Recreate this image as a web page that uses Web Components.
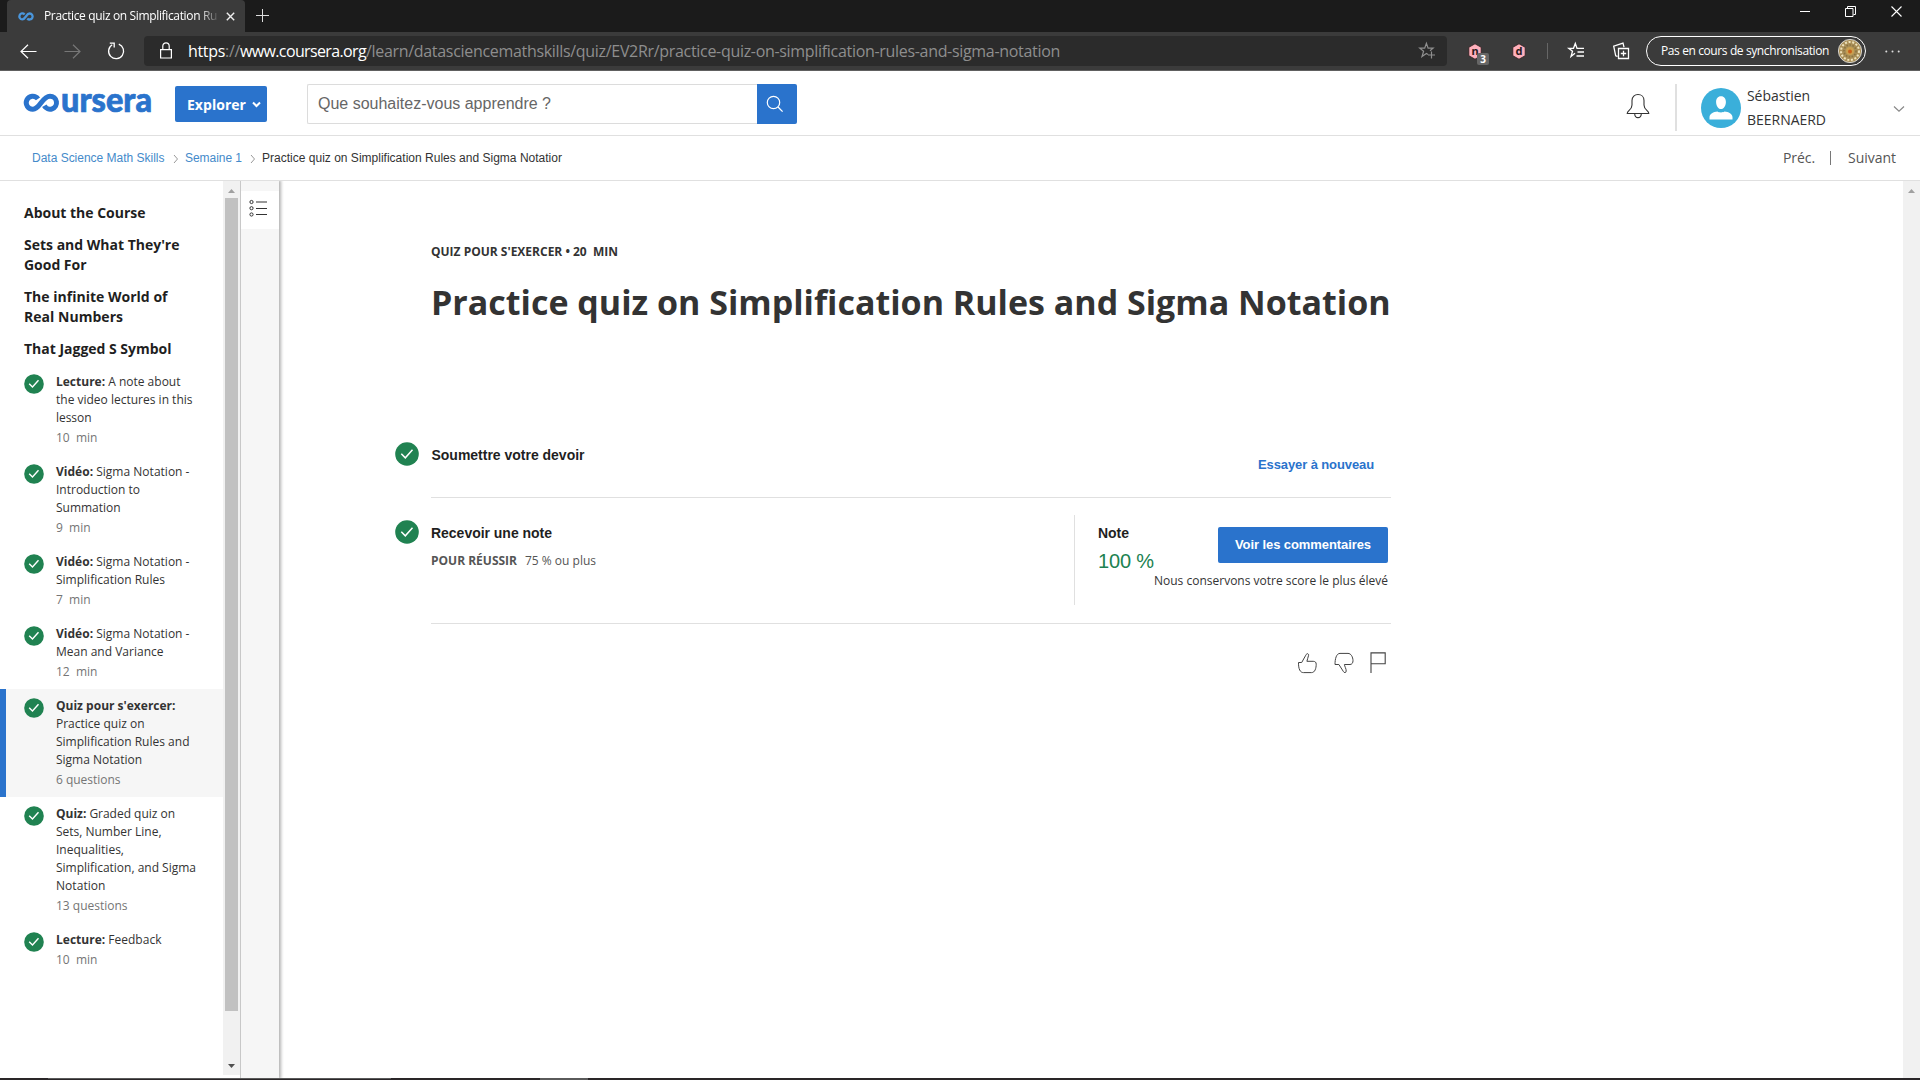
<!DOCTYPE html>
<html lang="fr">
<head>
<meta charset="utf-8">
<title>Practice quiz on Simplification Rules and Sigma Notation</title>
<style>
html,body{margin:0;height:100%;overflow:hidden;background:#fff}
body{font-family:"Open Sans","Noto Sans",sans-serif;color:#333}
</style>
</head>
<body>
<app-shell></app-shell>
<script>
const define=(name,html,setup)=>{
  const t=document.createElement('template');
  t.innerHTML=html;
  customElements.define(name,class extends HTMLElement{
    connectedCallback(){
      if(this.shadowRoot)return;
      this.attachShadow({mode:'open'}).appendChild(t.content.cloneNode(true));
      if(setup)setup(this,this.shadowRoot);
    }
  });
};

/* ---------- icons: [width, height, markup] ---------- */
const ICONS={
  infinity:[16,9,'<path d="M6.6 2.400A3 3 0 1 0 4.300 7.400C7.500 7.400 8.300 1.500 11.600 1.500A3 3 0 1 1 9.300 6.400" stroke="#4a96dc" stroke-width="2.300"/>'],
  tabclose:[9,9,'<path d="M.8.8l7.4 7.4M8.2.8L.8 8.2" stroke="#eee" stroke-width="1.4"/>'],
  plus:[13,13,'<path d="M6.5 0v13M0 6.5h13" stroke="#ddd"/>'],
  back:[17,15,'<path d="M16.5 7.5H1M8 .7L1 7.5l7 6.8" stroke="#fff" stroke-width="1.2"/>'],
  forward:[17,15,'<path d="M.5 7.500H16M9 .7l7 6.800-7 6.800" stroke="#777" stroke-width="1.200"/>'],
  reload:[17,18,'<path d="M10.800 2.200a7.500 7.500 0 1 1-6.600.6M1.800 1.200h4.400v4.400" stroke="#fff" stroke-width="1.300"/>'],
  lock:[12,17,'<path d="M.6 7.600h10.800v8.400H.6zM2.800 7.500V4a3.200 3.200 0 0 1 6.400 0v3.500" stroke="#fff" stroke-width="1.200"/>'],
  staradd:[17,18,'<path d="M9 12.500L7.400 11.400 3 14.500l1.600-5.300L.8 6.200h4.900L7.400 1.300 9.100 6.200h5L11 8.800M12.500 9.500v7M9 13h7" stroke="#8f8f8f" stroke-width="1.200"/>'],
  favorites:[17,18,'<path d="M7 11.300L3 14.500l1.500-5.300L.8 6.300h4.700L7.300 1.500 9 6.300h7M9.500 10H16M8.500 14H16" stroke="#fff" stroke-width="1.300"/>'],
  collections:[17,18,'<path d="M5.500 6.500h10v10h-10zM10.500 8.800v5.400M7.800 11.500h5.400M4.500 14.300L2.700 13.800.7 4.200 10 1.200l1 4" stroke="#fff" stroke-width="1.300"/>'],
  dots:[15,3,'<g fill="#ddd" stroke="none"><circle cx="1.300" cy="1.500" r="1"/><circle cx="7.500" cy="1.500" r="1"/><circle cx="13.700" cy="1.500" r="1"/></g>'],
  min:[10,11,'<path d="M0 5.500h10" stroke="#fff"/>'],
  restore:[11,11,'<path d="M.5 2.500h7.500v8H.5zM2.500 2.500v-2h8v8h-2" stroke="#fff" stroke-width="1"/>'],
  close:[11,11,'<path d="M.5.5l10 10M10.500.5l-10 10" stroke="#fff" stroke-width="1.100"/>'],
  hex:[14,17,'<path d="M7 .8l6.200 3.500v8.400L7 16.200.8 12.700V4.300z" fill="#ffb0bc" stroke="#2a1a1c" stroke-width=".8"/>'],
  search:[18,18,'<circle cx="7.500" cy="7.500" r="6.200" stroke="#fff" stroke-width="1.200"/><path d="M12 12l4.600 4.600" stroke="#fff" stroke-width="1.300"/>'],
  bell:[24,26,'<path d="M1.200 20.500C1.200 17.500 6 17 6 12V7.500C6 3.700 8.700 1.500 12 1.500s6 2.200 6 6V12c0 5 4.800 5.500 4.800 8.500zM8.700 20.700c.2 5.200 6.400 5.200 6.600 0" stroke="#333" stroke-width="1.100"/>'],
  chevw:[9,7,'<path d="M1 1.500l3.500 3.500L8 1.500" stroke="#fff" stroke-width="2"/>'],
  chev:[12,8,'<path d="M1 1.500l5 4.700 5-4.700" stroke="#888" stroke-width="1.200"/>'],
  crumb:[6,10,'<path d="M1 1l3.500 4L1 9" stroke="#999" stroke-width="1"/>'],
  user:[40,40,'<circle cx="20" cy="20" r="20" fill="#3aafda"/><path d="M20 8.300c3.300 0 4.900 2.500 4.900 5.600 0 3.400-1.900 7.100-4.900 7.100s-4.900-3.700-4.900-7.100c0-3.100 1.600-5.600 4.900-5.600zM8.500 31.500v-2.300c0-3 4-5.600 8-5.700 1.500 1.200 5.500 1.200 7 0 4 .1 8 2.700 8 5.700v2.300z" fill="#fff"/>'],
  list:[18,18,'<g stroke="#333"><circle cx="2.500" cy="3" r="1.600"/><circle cx="2.500" cy="9.200" r="1.600"/><circle cx="2.500" cy="15.500" r="1.600"/><path d="M7 3h11" stroke="#777" stroke-width="1.500"/><path d="M7 9.500h11M7 15.500h11"/></g>'],
  up:[20,22,'<path d="M1.500 10.500H4.700L8.800 3.200C9.800 1 11.800 1.300 11.600 3.300 11.500 5 10 7.500 9.900 9.300h6.300c2 0 3 1 3 2.900 0 4-1.200 8.400-4.700 8.400H6.400c-3.200 0-5-3.500-4.900-10.100z" stroke="#444" stroke-width="1"/>'],
  down:[20,22,'<path d="M1 12.500C1 7 2.300 1.400 6 1.400h8c3 0 4.900 3.500 5 7.300 0 2-1 3.800-3 3.800h-5.600c0 1.500 2 4.500 1.800 6.600-.2 2-2 2-2.900.3L4.900 12.500z" stroke="#444" stroke-width="1"/>'],
  flag:[16,21,'<path d="M1 21V.9h14.200v10.800H1" stroke="#444" stroke-width="1.100"/>'],
  arrowup:[7,4,'<path d="M0 4L3.500 0 7 4z" fill="#a0a0a0" stroke="none"/>'],
  arrowdown:[7,4,'<path d="M0 0l3.500 4L7 0z" fill="#505050" stroke="none"/>'],
  check20:[20,20,'<circle cx="10" cy="10" r="9.800" fill="#208251"/><path d="M5.200 9.700l3.300 3.300 6-6.700" stroke="#fff" stroke-width="1.400"/>'],
  check24:[24,24,'<circle cx="12" cy="12" r="11.800" fill="#208251"/><path d="M6.300 11.700l4 4.100 7.200-8" stroke="#fff" stroke-width="1.500"/>'],
  mark:[37,20,'<path d="M14 5.900A6.500 6.500 0 1 0 9 16.200C16 16.200 18 3.200 26 3.200A6.500 6.500 0 1 1 20.300 12.800" stroke="#2a73cc" stroke-width="5"/>'],
  rosette:[24,24,'<circle cx="12" cy="12" r="11.600" fill="#a98f58" stroke="#eee" stroke-width=".8"/><circle cx="12" cy="12" r="9" stroke="#efe3bb" stroke-width="2" stroke-dasharray="2 1.700"/><circle cx="12" cy="12" r="6" stroke="#8a7340" stroke-width="1.600" stroke-dasharray="1.500 1.500"/><circle cx="12" cy="12" r="4" fill="#c9a050"/><circle cx="12" cy="12.500" r="2" fill="#c9601a"/>']
};
define('ui-icon','<style>:host{display:block;flex:none}svg{display:block;overflow:visible}</style>',(el,root)=>{
  const [w,h,m]=ICONS[el.getAttribute('name')];
  const box=document.createElement('div');
  box.innerHTML=`<svg width="${w}" height="${h}" viewBox="0 0 ${w} ${h}" fill="none">${m}</svg>`;
  root.appendChild(box.firstChild);
});

/* ---------- browser window ---------- */
define('browser-bar',`<style>
:host{display:block;height:71px;font-size:12px;color:#fff;flex:none}
.tabs{height:32px;background:#1b1b1b;display:flex;align-items:flex-start}
.tab{margin-left:7px;width:238px;height:32px;background:#3b3b3b;border-radius:4px 4px 0 0;display:flex;box-sizing:border-box;padding-left:11px}
.tab ui-icon{margin-top:12px}
.tab .t{margin-left:10px;width:174px;height:32px;line-height:31px;-webkit-mask-image:linear-gradient(90deg,#000 155px,transparent 176px)}
.tab .x{margin-left:8px}
.plus{margin:9px 0 0 11px}
.win{margin-left:auto;display:flex;gap:35px;padding:6px 18px 0 0}
.bar{height:38px;background:#3b3b3b;border-bottom:1px solid #606060;display:flex;align-items:center;padding-left:20px}
.url{margin-left:19px;width:1303px;height:30px;margin-top:-1px;border-radius:4px;background:#2b2b2b;display:flex;align-items:center;padding-left:16px;box-sizing:border-box}
.addr{margin-left:16px;font-size:16px;line-height:28px;display:flex;color:#8e8e8e}
b{font-weight:400;color:#fff}
.url .s{margin-left:auto;margin-right:11px}
.ext{position:relative;display:grid;place-items:center;margin-left:21px}
.ext>*{grid-area:1/1}
.ext span{color:#2a1a1c;font:bold 11px/14px "Noto Sans",sans-serif;z-index:1}
.ext .badge{position:absolute;left:9px;top:10px;width:12px;height:12px;border-radius:2px;background:#666;color:#fff;font:bold 10px/12px "Open Sans",sans-serif;text-align:center;z-index:2}
.sep{width:1px;height:16px;background:#666;margin-left:21px}
.pill{margin-left:16px;margin-top:-1px;width:220px;height:30px;border:1px solid #fff;border-radius:15px;box-sizing:border-box;display:flex;align-items:center;justify-content:space-between;padding:0 3px 0 14px}
</style>
<div class="tabs"><div class="tab"><ui-icon name="infinity"></ui-icon><div class="t"><fit-text w="173">Practice quiz on Simplification Ru</fit-text></div><ui-icon class="x" name="tabclose"></ui-icon></div><ui-icon class="plus" name="plus"></ui-icon>
<div class="win"><ui-icon name="min"></ui-icon><ui-icon name="restore"></ui-icon><ui-icon name="close"></ui-icon></div></div>
<div class="bar"><ui-icon name="back"></ui-icon><ui-icon name="forward" style="margin-left:27px"></ui-icon><ui-icon name="reload" style="margin-left:27px"></ui-icon>
<div class="url"><ui-icon name="lock"></ui-icon><div class="addr"><b><fit-text w="37">https</fit-text></b><fit-text w="15">://</fit-text><b><fit-text w="126">www.coursera.org</fit-text></b><fit-text w="694">/learn/datasciencemathskills/quiz/EV2Rr/practice-quiz-on-simplification-rules-and-sigma-notation</fit-text></div><ui-icon class="s" name="staradd"></ui-icon></div>
<div class="ext"><ui-icon name="hex"></ui-icon><span>n</span><div class="badge">3</div></div>
<div class="ext" style="margin-left:30px"><ui-icon name="hex"></ui-icon><span>d</span></div>
<div class="sep"></div><ui-icon name="favorites" style="margin-left:20px"></ui-icon><ui-icon name="collections" style="margin-left:28px"></ui-icon>
<div class="pill"><fit-text w="168">Pas en cours de synchronisation</fit-text><ui-icon name="rosette"></ui-icon></div>
<ui-icon name="dots" style="margin-left:19px"></ui-icon></div>`);

/* ---------- site header ---------- */
define('site-header',`<style>
:host{display:flex;height:64px;flex:none;border-bottom:1px solid #e0e0e0;align-items:flex-start}
.logo{margin:22px 0 0 24px;width:127px;height:20px;display:flex}
.logo svg{display:block;overflow:visible}
.explore{margin:15px 0 0 24px;width:92px;height:36px;background:#2a73cc;border-radius:2px;color:#fff;font-weight:700;font-size:14px;line-height:35px;display:flex;align-items:center;box-sizing:border-box;padding-left:12px}
.search{margin:13px 0 0 40px;width:450px;height:40px;border:1px solid #dcdcdc;border-right:0;border-radius:2px 0 0 2px;box-sizing:border-box;padding-left:10px;font:16px/37px "Liberation Sans",Arial,sans-serif;color:#666}
.go{margin-top:13px;width:40px;height:40px;background:#2a73cc;border-radius:0 2px 2px 0;box-sizing:border-box;padding:11px 0 0 9px}
.right{margin-left:auto;display:flex}
.line{width:2px;height:47px;background:#e0e0e0;margin:13px 0 0 25px}
.name{margin:13px 0 0 6px;width:147px;font-size:14px;line-height:24px;display:flex;flex-direction:column;align-items:flex-start}
</style>
<div class="logo" role="img" aria-label="coursera"><ui-icon name="mark"></ui-icon><svg width="90" height="20"><text x="0" y="18.500" font-family="Lato" font-weight="900" font-size="34" fill="#2a73cc" stroke="#2a73cc" stroke-width=".7" textLength="91" lengthAdjust="spacingAndGlyphs">ursera</text></svg></div>
<div class="explore"><fit-text w="59">Explorer</fit-text><ui-icon name="chevw" style="margin-left:6px"></ui-icon></div>
<div class="search"><fit-text w="233">Que souhaitez-vous apprendre ?</fit-text></div><div class="go"><ui-icon name="search"></ui-icon></div>
<div class="right"><ui-icon name="bell" style="margin-top:22px"></ui-icon><div class="line"></div><ui-icon name="user" style="margin:17px 0 0 24px"></ui-icon>
<div class="name"><fit-text w="63">Sébastien</fit-text><fit-text w="79">BEERNAERD</fit-text></div><ui-icon name="chev" style="margin:34px 15px 0 -1px"></ui-icon></div>`);

define('bread-crumbs',`<style>
:host{display:flex;height:44px;flex:none;border-bottom:1px solid #e0e0e0;align-items:center;padding:0 24px 0 32px;font:12px/44px "Liberation Sans",Arial,sans-serif;color:#333}
.a{color:#448aca}
.r{margin-left:auto;display:flex;align-items:center;font:14px/46px "Open Sans",sans-serif;color:#555}
i{width:1px;height:14px;background:#777;margin:0 17px 0 15px}
ui-icon{margin:2px 6px 0 8.500px}
</style>
<fit-text class="a" w="132.500">Data Science Math Skills</fit-text><ui-icon name="crumb"></ui-icon><fit-text class="a" w="57">Semaine 1</fit-text><ui-icon name="crumb" style="margin-left:8px"></ui-icon><fit-text w="300">Practice quiz on Simplification Rules and Sigma Notatior</fit-text>
<div class="r"><fit-text w="32">Préc.</fit-text><i></i><fit-text w="48">Suivant</fit-text></div>`);

/* ---------- course navigation ---------- */
define('nav-item',`<style>
:host{display:flex;box-sizing:border-box;padding:8px 0 8px 24px;font-size:12px;line-height:18px;color:#333}
:host([active]){background:#f6f6f6;border-left:6px solid #2a73cc;padding-left:18px}
ui-icon{margin:1px 12px 0 0}
.m{margin-top:2px;color:#757575;white-space:pre}
</style><ui-icon name="check20"></ui-icon><div><slot></slot><div class="m"><slot name="meta"></slot></div></div>`);

define('course-nav',`<style>
:host{display:flex;flex:none;width:240px}
nav{width:223px;padding-top:22px;box-sizing:border-box}
h3{margin:0 0 12px 24px;font-size:14px;line-height:20px;font-weight:700;color:#1f1f1f}
h3.last{margin-bottom:6px}
fit-text.l{display:block}
b{font-weight:700}
.sb{width:17px;height:894px;background:#f1f1f1;display:flex;flex-direction:column;align-items:center}
.thumb{width:13px;height:813px;background:#c1c1c1;margin-top:5px}
</style>
<nav>
<h3><fit-text class="l" w="121.500">About the Course</fit-text></h3>
<h3><fit-text class="l" w="155.500">Sets and What They're</fit-text><fit-text class="l" w="62.500">Good For</fit-text></h3>
<h3><fit-text class="l" w="143.500">The infinite World of</fit-text><fit-text class="l" w="99">Real Numbers</fit-text></h3>
<h3 class="last"><fit-text class="l" w="147.500">That Jagged S Symbol</fit-text></h3>
<nav-item><fit-text class="l" w="124.500"><b>Lecture:</b> A note about</fit-text><fit-text class="l" w="136.500">the video lectures in this</fit-text><fit-text class="l" w="35.500">lesson</fit-text><fit-text slot="meta" w="41.500">10&nbsp; min</fit-text></nav-item>
<nav-item><fit-text class="l" w="133.500"><b>Vidéo:</b> Sigma Notation -</fit-text><fit-text class="l" w="84">Introduction to</fit-text><fit-text class="l" w="64.500">Summation</fit-text><fit-text slot="meta" w="34.500">9&nbsp; min</fit-text></nav-item>
<nav-item><fit-text class="l" w="133.500"><b>Vidéo:</b> Sigma Notation -</fit-text><fit-text class="l" w="109">Simplification Rules</fit-text><fit-text slot="meta" w="34.500">7&nbsp; min</fit-text></nav-item>
<nav-item><fit-text class="l" w="133.500"><b>Vidéo:</b> Sigma Notation -</fit-text><fit-text class="l" w="107.500">Mean and Variance</fit-text><fit-text slot="meta" w="41.500">12&nbsp; min</fit-text></nav-item>
<nav-item active><fit-text class="l" w="119.500"><b>Quiz pour s'exercer:</b></fit-text><fit-text class="l" w="88.500">Practice quiz on</fit-text><fit-text class="l" w="133.500">Simplification Rules and</fit-text><fit-text class="l" w="86">Sigma Notation</fit-text><fit-text slot="meta" w="64.500">6 questions</fit-text></nav-item>
<nav-item><fit-text class="l" w="119">
<b>Quiz:</b> Graded quiz on</fit-text><fit-text class="l" w="105.500">Sets, Number Line,</fit-text><fit-text class="l" w="68">Inequalities,</fit-text><fit-text class="l" w="140">Simplification, and Sigma</fit-text><fit-text class="l" w="49.500">Notation</fit-text><fit-text slot="meta" w="71.500">13 questions</fit-text></nav-item>
<nav-item><fit-text class="l" w="105.500"><b>Lecture:</b> Feedback</fit-text><fit-text slot="meta" w="41.500">10&nbsp; min</fit-text></nav-item>
</nav>
<div class="sb"><ui-icon name="arrowup" style="margin-top:8px"></ui-icon><div class="thumb"></div><ui-icon name="arrowdown" style="margin:auto 0 7px"></ui-icon></div>`.replace('w="119">\n','w="119">'));

define('side-rail',`<style>
:host{display:block;flex:none;width:38px;background:#f6f6f6;border-left:1px solid #c8c8c8;box-shadow:1px 0 3px 1px rgba(0,0,0,.3);clip-path:inset(0 -6px 0 0)}
div{margin-top:10px;height:38px;background:#fff;display:flex;align-items:flex-start;padding:8px 0 0 8px;box-sizing:border-box}
</style><div><ui-icon name="list"></ui-icon></div>`);

/* ---------- quiz page ---------- */
define('quiz-page',`<style>
:host{display:flex;flex:1;min-width:0}
.c{margin:0 auto 0 116px;width:996px}
.in{margin-left:36px;width:960px}
.meta{padding-top:61px;font-size:12px;line-height:20px;font-weight:700;white-space:pre}
h1{margin:15px 0 0 0;font-size:34px;line-height:50px;font-weight:700;color:#333}
.step{display:flex}
.body{flex:1;margin-left:12px;border-bottom:1px solid #e0e0e0;display:flex;justify-content:space-between;box-sizing:border-box}
.h{font:bold 14px/20px "Liberation Sans",Arial,sans-serif;color:#1f1f1f}
.one{margin-top:112px}
.one ui-icon{margin-top:3px}
.one .body{height:59px}
.retry{margin:15px 17px 0 0;font:bold 13px/22px "Liberation Sans",Arial,sans-serif;color:#2a73cc}
.two .body{height:126px;padding-top:17px}
.two>ui-icon{margin-top:22px}
.two .h{margin-top:8px}
.pass{display:flex;margin-top:8px;font-size:12px;line-height:20px;color:#555;gap:8px}
.pass b{font-weight:700}
.grade{border-left:1px solid #e0e0e0;height:90px;width:317px;display:flex;box-sizing:border-box;padding-left:23px}
.val{margin-top:3px;font:20px/30px "Liberation Sans",Arial,sans-serif;color:#208251}
.act{display:flex;flex-direction:column;align-items:flex-end;margin-left:auto;margin-right:3px;padding-top:12px}
.btn{width:170px;height:36px;border-radius:2px;background:#2a73cc;color:#fff;font:bold 13px/35px "Liberation Sans",Arial,sans-serif;text-align:center}
.note{font-size:12px;line-height:18px;margin-top:9px}
.left{width:56px}
.fb{display:flex;padding:28px 5px 0 0;justify-content:flex-end}
.sb{width:17px;background:#f1f1f1;padding:8px 0 0 5px;box-sizing:border-box}
</style>
<div class="c">
<div class="in"><div class="meta"><fit-text w="187">QUIZ POUR S'EXERCER • 20&nbsp; MIN</fit-text></div><h1><fit-text w="959.500">Practice quiz on Simplification Rules and Sigma Notation</fit-text></h1></div>
<div class="step one"><ui-icon name="check24"></ui-icon><div class="body"><div class="h" style="margin:6px 0 0 .5px"><fit-text w="153">Soumettre votre devoir</fit-text></div><div class="retry"><fit-text w="116">Essayer à nouveau</fit-text></div></div></div>
<div class="step two"><ui-icon name="check24"></ui-icon><div class="body"><div><div class="h"><fit-text w="121">Recevoir une note</fit-text></div><div class="pass"><b><fit-text w="86">POUR RÉUSSIR</fit-text></b><fit-text w="71">75 % ou plus</fit-text></div></div>
<div class="grade"><div class="left"><div class="h"><fit-text w="31">Note</fit-text></div><div class="val"><fit-text w="56">100 %</fit-text></div></div><div class="act"><div class="btn"><fit-text w="136">Voir les commentaires</fit-text></div><div class="note"><fit-text w="234">Nous conservons votre score le plus élevé</fit-text></div></div></div></div></div>
<div class="fb"><ui-icon name="up" style="margin-right:17px"></ui-icon><ui-icon name="down" style="margin-right:16px"></ui-icon><ui-icon name="flag"></ui-icon></div>
</div>
<div class="sb"><ui-icon name="arrowup"></ui-icon></div>`);

define('task-strip',`<style>:host{display:flex;height:2px;flex:none;background:#2a2628}
i{display:block;height:1px;background:#5a5a5a}</style><i style="width:343px;margin-left:48px"></i><i style="width:48px;height:2px;margin-left:149px"></i>`);

define('app-shell',`<style>
:host{display:flex;flex-direction:column;width:1920px;height:1080px;overflow:hidden;background:#fff}
main{flex:1;min-height:0;display:flex}
</style><browser-bar></browser-bar><site-header></site-header><bread-crumbs></bread-crumbs>
<main><course-nav></course-nav><side-rail></side-rail><quiz-page></quiz-page></main><task-strip></task-strip>`);

/* Single-line text tracked to a given advance width. */
define('fit-text','<style>:host{display:inline-block;white-space:pre}span{display:inline-block}</style><span><slot></slot></span>',(el,root)=>{
  const s=root.querySelector('span'),w=+el.getAttribute('w');
  s.style.letterSpacing=(w-s.getBoundingClientRect().width)/el.textContent.length+'px';
});
</script>
</body>
</html>
